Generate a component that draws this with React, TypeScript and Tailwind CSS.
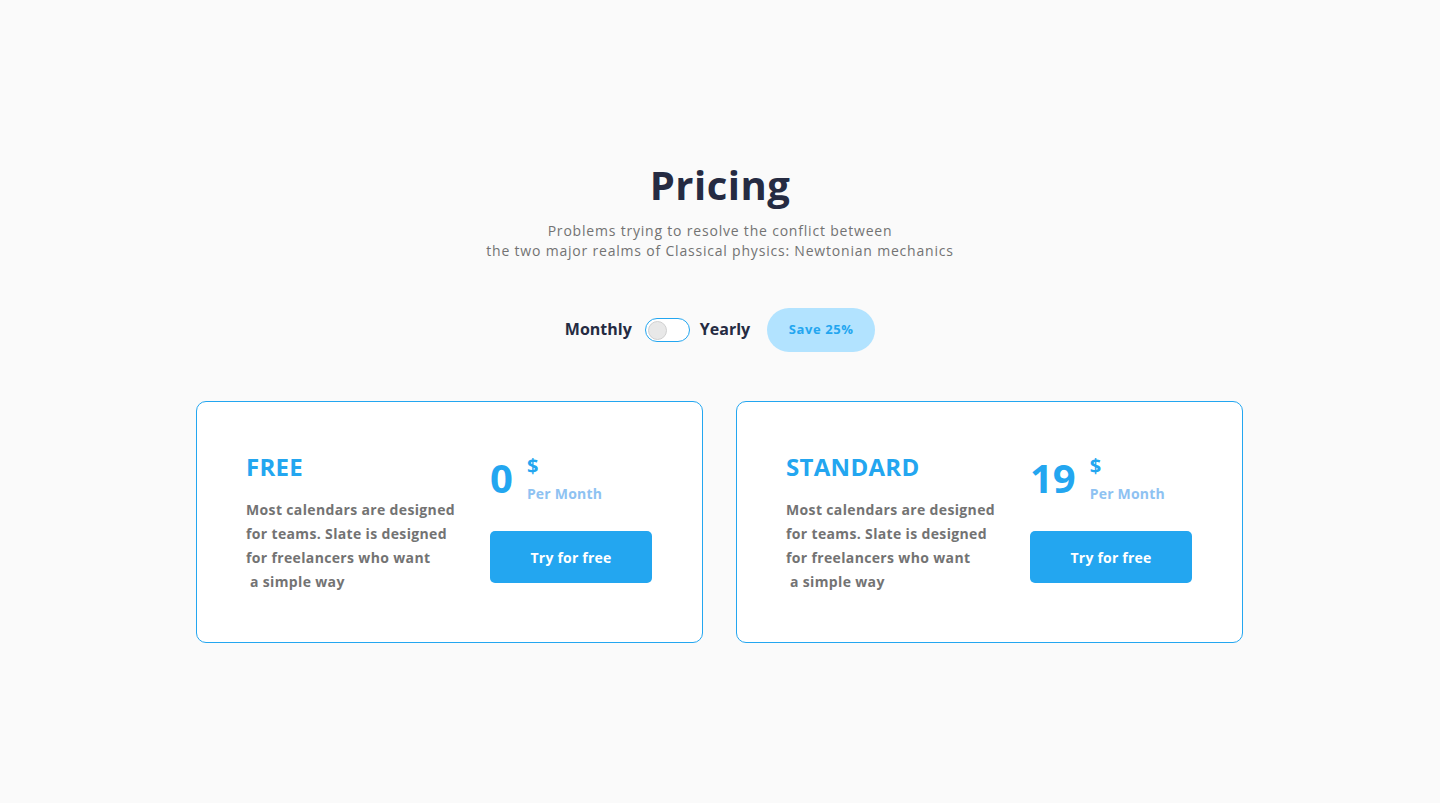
import { useState } from 'react';

const plans = [
  { name: 'FREE', price: '0' },
  { name: 'STANDARD', price: '19' },
];

function PlanCard({ name, price }: { name: string; price: string }) {
  return (
    <div className="w-[507px] h-[242px] bg-white border border-[#23a6f0] rounded-[10px] px-[49px] pt-[49px] flex">
      <div className="w-[244px]">
        <h3 className="text-[24px] leading-[32px] font-bold text-[#23a6f0] tracking-[0.3px]">{name}</h3>
        <p className="mt-[15px] text-[14px] leading-[24px] font-bold text-[#737373] whitespace-pre tracking-[0.35px]">
          {'Most calendars are designed\nfor teams. Slate is designed\nfor freelancers who want\n a simple way'}
        </p>
      </div>
      <div className="flex flex-col">
        <div className="flex items-start">
          <span className="text-[40px] leading-[54px] font-bold text-[#23a6f0]">{price}</span>
          <div className="ml-[14px] flex flex-col">
            <span className="mt-[3px] text-[20px] leading-[24px] font-bold text-[#23a6f0]">$</span>
            <span className="mt-[4px] text-[14px] leading-[24px] font-bold text-[#8ec2f2] tracking-[0.2px]">Per Month</span>
          </div>
        </div>
        <button className="mt-[25px] w-[162px] h-[52px] rounded-[5px] bg-[#23a6f0] text-white text-[14px] font-bold tracking-[0.2px]">
          Try for free
        </button>
      </div>
    </div>
  );
}

export default function App() {
  const [yearly, setYearly] = useState(false);

  return (
    <div className="min-h-[803px] bg-[#fafafa] flex flex-col items-center pt-[160px] font-['Open_Sans',sans-serif]">
      <h1 className="text-[40px] leading-[50px] font-bold text-[#252b42] tracking-[0.5px]">Pricing</h1>
      <p className="mt-[11px] text-[14px] leading-[20px] text-[#737373] text-center tracking-[0.8px]">
        Problems trying to resolve the conflict between
        <br />
        the two major realms of Classical physics: Newtonian mechanics
      </p>

      <div className="mt-[47px] h-[44px] flex items-center">
        <span className="-mt-[3px] text-[16px] font-bold text-[#252b42]">Monthly</span>
        <button
          onClick={() => setYearly(!yearly)}
          className={`ml-[13px] w-[45px] h-[24px] rounded-full border border-[#23a6f0] bg-white flex items-center px-[2px] ${yearly ? 'justify-end' : 'justify-start'}`}
        >
          <span className="w-[19px] h-[19px] rounded-full bg-[#e8e8e8] border border-[#d0d0d0]" />
        </button>
        <span className="-mt-[3px] ml-[10px] text-[16px] font-bold text-[#252b42]">Yearly</span>
        <span className="ml-[17px] w-[108px] h-[44px] rounded-full bg-[#b2e3ff] flex items-center justify-center text-[13px] font-bold text-[#23a6f0] tracking-[0.6px]">
          Save 25%
        </span>
      </div>

      <div className="mt-[49px] w-[1048px] flex gap-[33px]">
        {plans.map((p) => (
          <PlanCard key={p.name} name={p.name} price={p.price} />
        ))}
      </div>
    </div>
  );
}
